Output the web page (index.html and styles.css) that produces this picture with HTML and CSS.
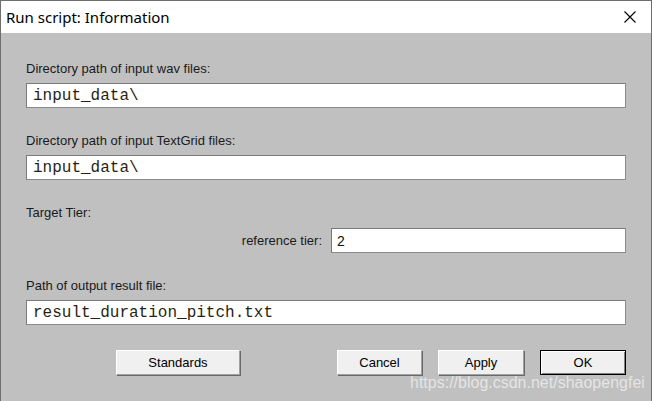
FILE: index.html
```html
<!DOCTYPE html>
<html>
<head>
<meta charset="utf-8">
<link rel="stylesheet" href="styles.css">
</head>
<body>
<div class="window">
  <div class="titlebar">
    <span class="title">Run script: Information</span>
    <svg class="close" width="12" height="12" viewBox="0 0 12 12"><path d="M0.5 0.5 L11.5 11.5 M11.5 0.5 L0.5 11.5" stroke="#000" stroke-width="1.1" fill="none"/></svg>
  </div>
  <div class="content">
    <div class="group">
      <div class="label">Directory path of input wav files:</div>
      <div class="field mono">input_data\</div>
    </div>
    <div class="group">
      <div class="label">Directory path of input TextGrid files:</div>
      <div class="field mono">input_data\</div>
    </div>
    <div class="group">
      <div class="label">Target Tier:</div>
      <div class="row">
        <span class="rlabel">reference tier:</span>
        <div class="field small">2</div>
      </div>
    </div>
    <div class="group last">
      <div class="label">Path of output result file:</div>
      <div class="field mono">result_duration_pitch.txt</div>
    </div>
    <div class="buttons">
      <div class="btn standards">Standards</div>
      <div class="btn cancel">Cancel</div>
      <div class="btn apply">Apply</div>
      <div class="btn ok"><span>OK</span></div>
    </div>
  </div>
  <div class="watermark">https://blog.csdn.net/shaopengfei</div>
</div>
</body>
</html>
```
FILE: styles.css
```css
html, body {
  margin: 0;
  padding: 0;
  width: 652px;
  height: 401px;
  overflow: hidden;
  background: #c0c0c0;
}
.window {
  position: relative;
  width: 652px;
  height: 401px;
  box-sizing: border-box;
  border: 1px solid #6e6e6e;
  border-bottom: none;
  background: #c0c0c0;
  font-family: "Liberation Sans", Arial, sans-serif;
}
.titlebar {
  height: 32px;
  background: #fff;
  display: flex;
  align-items: center;
  justify-content: space-between;
  padding: 0 15px 0 5px;
}
.title {
  font-family: "Noto Sans", "Open Sans", sans-serif;
  font-size: 15px;
  color: #000;
  margin-top: -1px;
}
.close {
  display: block;
}
.content {
  padding: 29px 0 0 25px;
}
.group {
  margin-bottom: 26px;
}
.group.last {
  margin-top: 1px;
  margin-bottom: 25px;
}
.label {
  font-size: 13px;
  line-height: 14px;
  color: #1a1a1a;
  height: 14px;
  margin-bottom: 7px;
}
.field {
  width: 600px;
  height: 25px;
  box-sizing: border-box;
  background: #fff;
  border: 1px solid #7a7a7a;
  border-right-color: #8a8a8a;
  border-bottom-color: #8a8a8a;
  padding-left: 6px;
  display: flex;
  align-items: center;
}
.mono {
  font-family: "Liberation Mono", "Courier New", monospace;
  font-size: 16px;
  color: #2a1f14;
}
.row {
  display: flex;
  align-items: center;
  justify-content: flex-end;
  width: 600px;
  margin-top: 8px;
}
.rlabel {
  font-size: 13px;
  color: #1a1a1a;
  margin-right: 9px;
}
.field.small {
  width: 295px;
  font-size: 14px;
  color: #111;
  padding-left: 5px;
}
.buttons {
  display: flex;
  height: 25px;
}
.btn {
  box-sizing: border-box;
  height: 25px;
  background: #f0f0f0;
  border-top: 1px solid #fff;
  border-left: 1px solid #fff;
  border-right: 1px solid #a0a0a0;
  border-bottom: 1px solid #a0a0a0;
  box-shadow: 1px 1px 0 #696969;
  font-size: 13px;
  color: #000;
  display: flex;
  align-items: center;
  justify-content: center;
}
.standards {
  margin-left: 90px;
  width: 124px;
}
.cancel {
  margin-left: 97px;
  width: 85px;
}
.apply {
  margin-left: 16px;
  width: 86px;
}
.ok {
  margin-left: 16px;
  width: 86px;
  border: 1px solid #000;
  box-shadow: inset 1px 1px 0 #fff, inset -1px -1px 0 #808080;
}
.watermark {
  position: absolute;
  left: 409px;
  top: 373px;
  font-family: "Liberation Sans", Arial, sans-serif;
  font-size: 16px;
  color: rgba(255, 255, 255, 0.6);
  white-space: nowrap;
}
```
